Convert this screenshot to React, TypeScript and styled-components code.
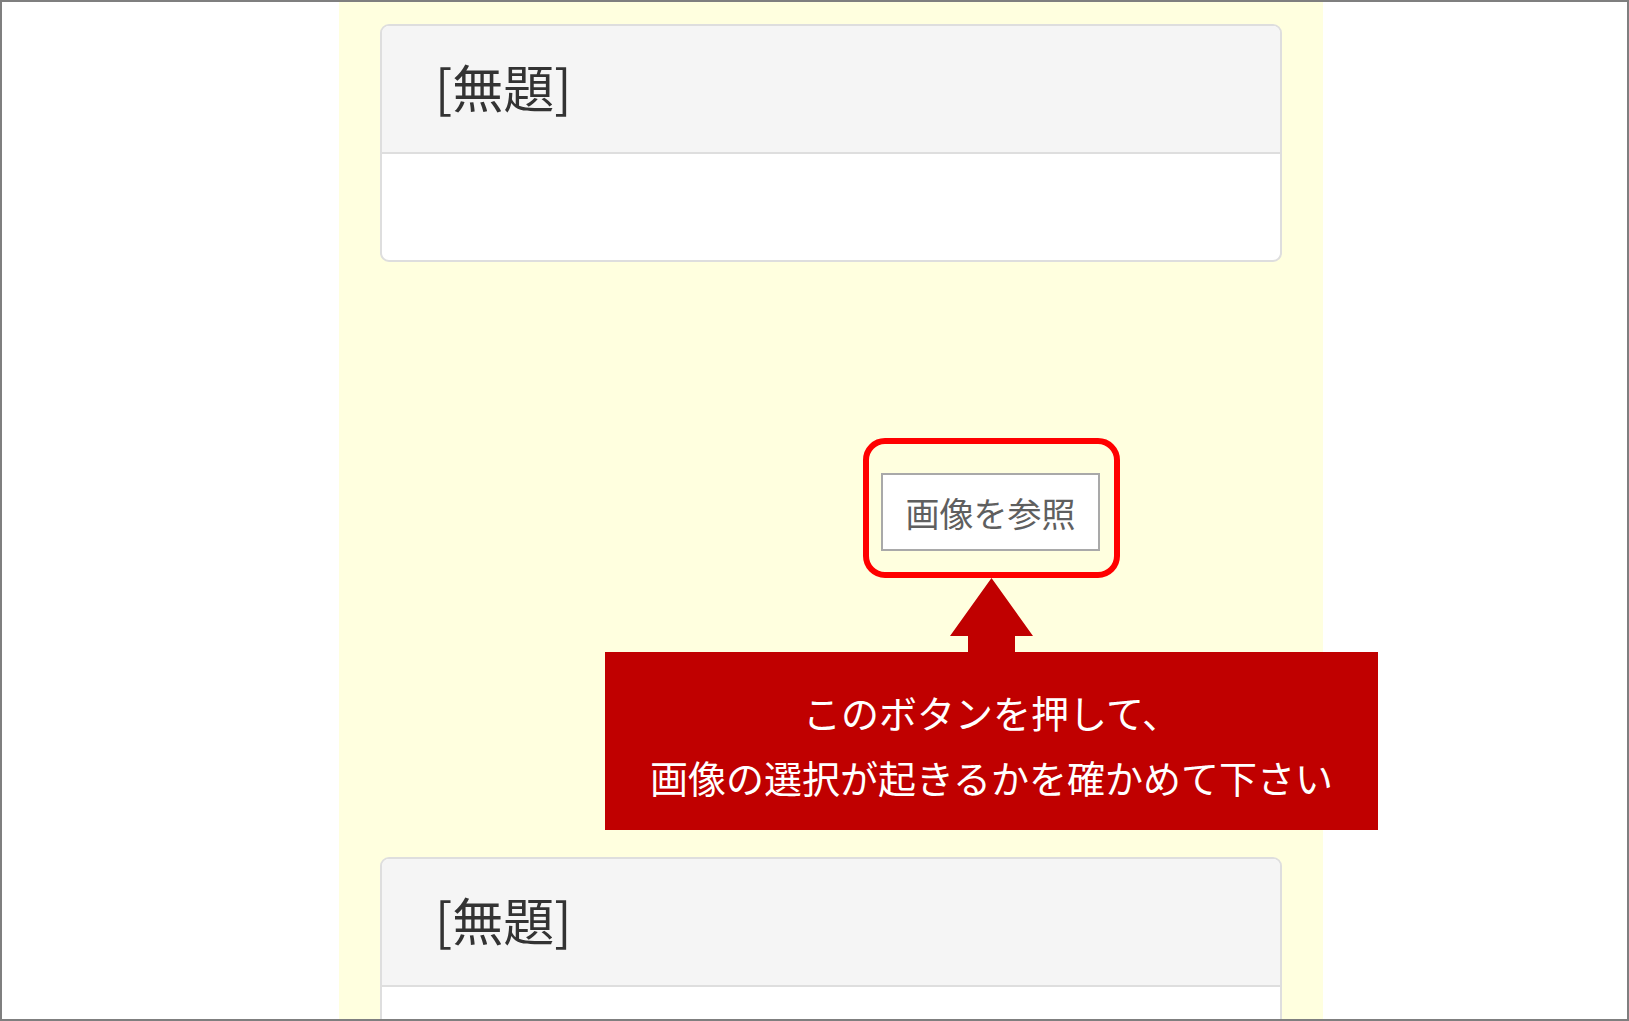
import React from 'react';
import styled, { createGlobalStyle } from 'styled-components';

const GlobalStyle = createGlobalStyle`
  html, body {
    margin: 0;
    padding: 0;
    background: #ffffff;
  }
  body {
    font-family: "Noto Sans CJK JP", "Noto Sans", sans-serif;
  }
`;

const Frame = styled.div`
  box-sizing: border-box;
  width: 1629px;
  height: 1021px;
  border: 2px solid #7f7f7f;
  background: #ffffff;
  overflow: hidden;
`;

const Column = styled.div`
  box-sizing: border-box;
  margin-left: 337px;
  width: 984px;
  min-height: 100%;
  padding-top: 22px;
  background-color: #ffffdf;
`;

const Panel = styled.div`
  margin: 0 41px 0 41px;
  border: 2px solid #dedede;
  border-radius: 9px;
  background: #ffffff;
  overflow: hidden;
`;

const PanelHeading = styled.div`
  box-sizing: border-box;
  display: flex;
  align-items: center;
  height: 128px;
  padding: 0 0 6px 53px;
  background-color: #f5f5f5;
  border-bottom: 2px solid #dedede;
`;

const PanelTitle = styled.h3`
  margin: 0;
  font-size: 51px;
  font-weight: 400;
  line-height: 1;
  color: #333333;
  font-family: "Noto Sans CJK JP", sans-serif;
`;

const PanelBody = styled.div`
  height: 106px;
`;

const UploadArea = styled.div`
  height: 595px;
  padding-top: 176px;
  box-sizing: border-box;
`;

const Annotation = styled.div`
  display: flex;
  flex-direction: column;
  align-items: center;
  width: 773px;
  margin-left: 266px;
`;

const Highlight = styled.div`
  border: 6px solid #ff0000;
  border-radius: 22px;
  padding: 29px 14px 21px 12px;
`;

const BrowseButton = styled.button`
  box-sizing: border-box;
  display: block;
  width: 219px;
  height: 78px;
  border: 2px solid #a9a9a9;
  background: #ffffff;
  color: #5f5f5f;
  font-family: "Noto Sans CJK JP", sans-serif;
  font-size: 34px;
  padding: 0;
  cursor: pointer;
`;

const ArrowUp = styled.svg`
  display: block;
  width: 83px;
  height: 74px;
`;

const Callout = styled.div`
  box-sizing: border-box;
  width: 773px;
  height: 178px;
  display: flex;
  flex-direction: column;
  align-items: center;
  justify-content: center;
  background-color: #c00000;
  color: #ffffff;
  font-family: "Noto Sans CJK JP", sans-serif;
  font-size: 38px;
  line-height: 65px;
  padding-top: 6px;
`;

const CalloutLine = styled.div`
  white-space: nowrap;
`;

const TitledPanel: React.FC<{ title: string }> = ({ title }) => (
  <Panel>
    <PanelHeading>
      <PanelTitle>{title}</PanelTitle>
    </PanelHeading>
    <PanelBody />
  </Panel>
);

export default function App() {
  return (
    <>
      <GlobalStyle />
      <Frame>
        <Column>
          <TitledPanel title="[無題]" />

          <UploadArea>
            <Annotation>
              <Highlight>
                <BrowseButton type="button">画像を参照</BrowseButton>
              </Highlight>
              <ArrowUp viewBox="0 0 83 74" aria-hidden="true">
                <polygon points="41.5,0 83,58 65,58 65,74 18,74 18,58 0,58" fill="#c00000" />
              </ArrowUp>
              <Callout>
                <CalloutLine>このボタンを押して、</CalloutLine>
                <CalloutLine>画像の選択が起きるかを確かめて下さい</CalloutLine>
              </Callout>
            </Annotation>
          </UploadArea>

          <TitledPanel title="[無題]" />
        </Column>
      </Frame>
    </>
  );
}
